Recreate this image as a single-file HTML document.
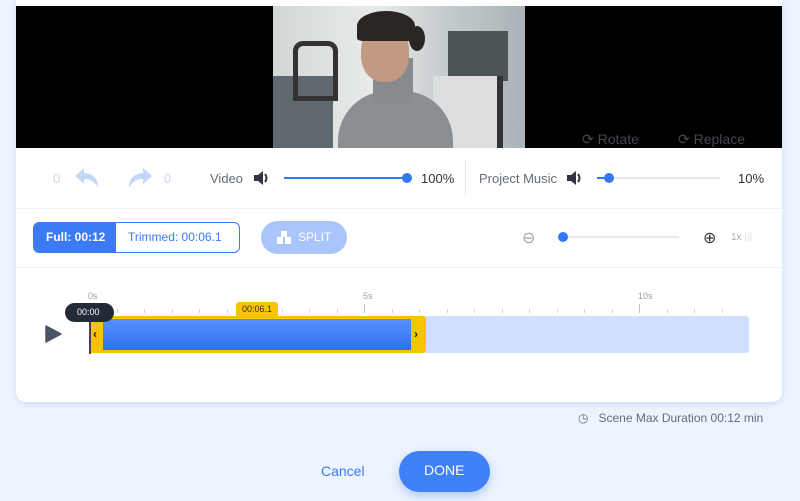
<!DOCTYPE html>
<html><head><style>
*{margin:0;padding:0;box-sizing:border-box}
body{width:800px;height:501px;background:#eef4fd;font-family:"Liberation Sans",sans-serif;position:relative;overflow:hidden}
.card{position:absolute;left:16px;top:0;width:766px;height:402px;background:#fff;border-radius:0 0 10px 10px;box-shadow:0 2px 6px rgba(120,150,200,.25)}
.abs{position:absolute}
.t{position:absolute;white-space:nowrap}
</style></head><body>
<div class="card"></div>
<div class="abs" style="left:16px;top:6px;width:766px;height:142px;background:#000"></div>
<div class="abs" style="left:273px;top:6px;width:252px;height:142px;overflow:hidden;background:linear-gradient(90deg,#d2d6d6,#e8ebe9 40%,#c3cacc 70%,#a9b3b7)">
 <div class="abs" style="left:0;top:70px;width:60px;height:72px;background:#5f686c"></div>
 <div class="abs" style="left:20px;top:35px;width:45px;height:60px;border:5px solid #333;border-radius:10px 10px 0 0"></div>
 <div class="abs" style="left:175px;top:25px;width:60px;height:50px;background:#4d5458"></div>
 <div class="abs" style="left:160px;top:70px;width:70px;height:72px;background:#dcdedf;border-right:6px solid #333"></div>
 <div class="abs" style="left:65px;top:85px;width:115px;height:70px;background:#8c8f92;border-radius:50px 50px 0 0"></div>
 <div class="abs" style="left:100px;top:52px;width:40px;height:45px;background:#888b8e"></div>
 <div class="abs" style="left:88px;top:18px;width:48px;height:58px;background:#c29a84;border-radius:45%"></div>
 <div class="abs" style="left:84px;top:5px;width:58px;height:30px;background:#2a2422;border-radius:50% 50% 10% 10%"></div>
 <div class="abs" style="left:136px;top:20px;width:16px;height:25px;background:#2a2422;border-radius:50%"></div>
</div>
<div class="t" style="left:582px;top:131px;color:#44484f;font-size:14px">⟳ Rotate</div>
<div class="t" style="left:678px;top:131px;color:#44484f;font-size:14px">⟳ Replace</div>

<div class="abs" style="left:16px;top:208px;width:766px;height:1px;background:#eef1f6"></div>
<div class="abs" style="left:16px;top:267px;width:766px;height:1px;background:#eef1f6"></div>
<div class="abs" style="left:465px;top:160px;width:1px;height:36px;background:#e6e9ef"></div>

<div class="t" style="left:53px;top:171px;color:#c9d6ef;font-size:13px">0</div>
<svg class="abs" style="left:74px;top:167px" width="26" height="22" viewBox="0 0 26 22"><path d="M10 1L1 9l9 8v-5c7 0 11 3 14 9 0-9-5-15-14-15z" fill="#c5d6f7"/></svg>
<svg class="abs" style="left:127px;top:167px" width="26" height="22" viewBox="0 0 26 22"><path d="M16 1l9 8-9 8v-5C9 12 5 15 2 21 2 12 7 6 16 6z" fill="#c5d6f7"/></svg>
<div class="t" style="left:164px;top:171px;color:#c9d6ef;font-size:13px">0</div>
<div class="t" style="left:210px;top:171px;color:#666c76;font-size:13px">Video</div>
<svg class="abs" style="left:253px;top:170px" width="18" height="16" viewBox="0 0 18 16"><path d="M1 5h4l5-4v14l-5-4H1z" fill="#2e3440"/><path d="M12 4q3 4 0 8" stroke="#2e3440" stroke-width="2" fill="none"/></svg>
<div class="abs" style="left:284px;top:177px;width:123px;height:2px;background:#3477f5"></div>
<div class="abs" style="left:402px;top:173px;width:10px;height:10px;border-radius:50%;background:#3477f5"></div>
<div class="t" style="left:421px;top:171px;color:#333;font-size:13px">100%</div>
<div class="t" style="left:479px;top:171px;color:#666c76;font-size:13px">Project Music</div>
<svg class="abs" style="left:566px;top:170px" width="18" height="16" viewBox="0 0 18 16"><path d="M1 5h4l5-4v14l-5-4H1z" fill="#2e3440"/><path d="M12 4q3 4 0 8" stroke="#2e3440" stroke-width="2" fill="none"/></svg>
<div class="abs" style="left:597px;top:177px;width:123px;height:2px;background:#e3e9f3"></div>
<div class="abs" style="left:597px;top:177px;width:12px;height:2px;background:#3477f5"></div>
<div class="abs" style="left:604px;top:173px;width:10px;height:10px;border-radius:50%;background:#3477f5"></div>
<div class="t" style="left:738px;top:171px;color:#333;font-size:13px">10%</div>

<div class="abs" style="left:33px;top:222px;width:207px;height:31px;border:1px solid #3a7af5;border-radius:6px;overflow:hidden">
 <div class="abs" style="left:0;top:0;width:82px;height:31px;background:#3a7af5"></div>
</div>
<div class="t" style="left:46px;top:230px;color:#fff;font-size:12px;font-weight:bold">Full: 00:12</div>
<div class="t" style="left:128px;top:230px;color:#3a7af5;font-size:12px">Trimmed: 00:06.1</div>
<div class="abs" style="left:261px;top:221px;width:86px;height:33px;border-radius:17px;background:#a9c5fb"></div>
<svg class="abs" style="left:277px;top:230px" width="14" height="14"><rect x="4" y="1" width="6" height="6" fill="#fff"/><rect x="0" y="7" width="6" height="7" fill="#fff"/><rect x="8" y="7" width="6" height="7" fill="#fff"/></svg>
<div class="t" style="left:298px;top:230px;color:#fff;font-size:12px">SPLIT</div>
<div class="t" style="left:522px;top:228px;color:#9aa2ae;font-size:16px">⊖</div>
<div class="abs" style="left:563px;top:236px;width:116px;height:2px;background:#e3e9f3"></div>
<div class="abs" style="left:558px;top:232px;width:10px;height:10px;border-radius:50%;background:#3477f5"></div>
<div class="t" style="left:703px;top:228px;color:#2e3440;font-size:16px">⊕</div>
<div class="t" style="left:731px;top:232px;color:#aab;font-size:10px">1x <span style="color:#d8dee8">|||</span></div>

<div class="t" style="left:88px;top:291px;color:#999faa;font-size:9px">0s</div>
<div class="t" style="left:363px;top:291px;color:#999faa;font-size:9px">5s</div>
<div class="t" style="left:638px;top:291px;color:#999faa;font-size:9px">10s</div>
<div id="ticks"></div>
<script>
var h='';for(var i=0;i<=23;i++){var x=89+27.5*i;var maj=i%10==0;h+='<div class="abs" style="left:'+x+'px;top:'+(maj?304:309)+'px;width:1px;height:'+(maj?9:4)+'px;background:'+(maj?'#b8c3d8':'#cfd6e2')+'"></div>';}document.getElementById('ticks').innerHTML=h;
</script>
<div class="abs" style="left:89px;top:316px;width:660px;height:37px;background:#cfe0fc;border-radius:3px"></div>
<div class="abs" style="left:89px;top:316px;width:337px;height:37px;background:#f7c400;border-radius:3px"></div>
<div class="abs" style="left:103px;top:319px;width:308px;height:31px;background:linear-gradient(#5790fb,#2f6ff2)"></div>
<div class="t" style="left:93px;top:327px;font-size:12px;font-weight:bold;color:#222">‹</div>
<div class="t" style="left:414px;top:327px;font-size:12px;font-weight:bold;color:#222">›</div>
<div class="abs" style="left:236px;top:302px;width:42px;height:15px;background:#f7c400;border-radius:3px 3px 0 0"></div>
<div class="t" style="left:242px;top:304px;font-size:9px;color:#333">00:06.1</div>
<div class="abs" style="left:89px;top:318px;width:2px;height:36px;background:#444"></div>
<div class="abs" style="left:65px;top:303px;width:49px;height:19px;border-radius:10px;background:#232a38"></div>
<div class="t" style="left:77px;top:307px;font-size:9px;color:#fff">00:00</div>
<svg class="abs" style="left:45px;top:325px" width="17" height="18"><path d="M1 1L16 9L1 17Z" fill="#4a5468" stroke="#4a5468" stroke-linejoin="round" stroke-width="1.5"/></svg>

<div class="t" style="left:578px;top:411px;font-size:12px;color:#666c76">◷ &nbsp;&nbsp;Scene Max Duration 00:12 min</div>
<div class="t" style="left:321px;top:463px;font-size:14px;color:#3a7af5">Cancel</div>
<div class="abs" style="left:399px;top:451px;width:91px;height:41px;border-radius:21px;background:#3f80f7;box-shadow:0 4px 10px rgba(60,120,240,.35)"></div>
<div class="t" style="left:424px;top:462px;font-size:14px;color:#fff">DONE</div>
</body></html>
